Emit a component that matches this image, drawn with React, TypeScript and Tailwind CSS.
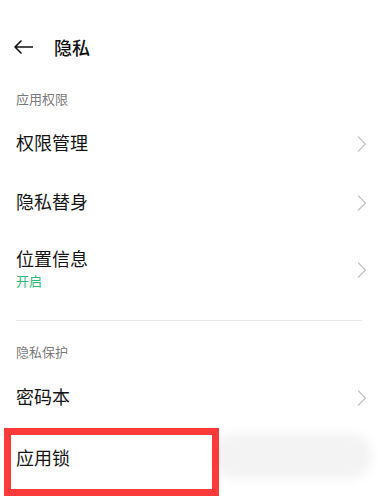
import { ReactNode } from "react";

const font = { fontFamily: '"Noto Sans CJK SC", "Noto Sans", sans-serif' };

function Chevron() {
  return (
    <svg width="10" height="16" viewBox="0 0 10 16" fill="none" className="shrink-0">
      <path d="M1.5 1 L8.5 8 L1.5 15" stroke="#c6c6c6" strokeWidth="1.4" strokeLinecap="round" strokeLinejoin="round" />
    </svg>
  );
}

function SectionLabel({ children }: { children: ReactNode }) {
  return (
    <div className="h-[22px] px-4 text-[13px] leading-[22px] text-[#7a7a7a]">{children}</div>
  );
}

function Row({
  title,
  sub,
  chevron = true,
  className = "h-[59px]",
}: {
  title: string;
  sub?: string;
  chevron?: boolean;
  className?: string;
}) {
  return (
    <div className={`flex items-center justify-between pl-4 pr-[11px] ${className}`}>
      <div className="flex flex-col -mt-[3px]">
        <div className="text-[18px] leading-[24px] text-[#141414]">{title}</div>
        {sub && <div className="mt-[1px] text-[13px] leading-[20px] text-[#2fb878]">{sub}</div>}
      </div>
      {chevron && <Chevron />}
    </div>
  );
}

export default function App() {
  return (
    <div className="w-[378px] h-[500px] overflow-hidden bg-white" style={font}>
      <div className="h-[88px] pt-[6px] flex items-center">
        <div className="flex items-center pl-[14px]">
          <svg width="19" height="14" viewBox="0 0 19 14" fill="none">
            <path d="M1 7 H18.5 M7 1 L1 7 L7 13" stroke="#111" strokeWidth="1.6" strokeLinecap="round" strokeLinejoin="round" />
          </svg>
          <span className="ml-[21px] text-[18px] font-medium leading-[24px] text-[#111]">隐私</span>
        </div>
      </div>

      <div className="pb-1">
        <SectionLabel>应用权限</SectionLabel>
      </div>
      <Row title="权限管理" />
      <Row title="隐私替身" />
      <Row title="位置信息" sub="开启" className="h-[75px]" />

      <div className="mt-[13px] mx-4 h-px bg-[#e6e6e6]" />

      <div className="mt-[20px]">
        <SectionLabel>隐私保护</SectionLabel>
      </div>
      <div className="mt-[5px]">
        <Row title="密码本" />
      </div>
      <div className="relative">
        <Row title="应用锁" chevron={false} className="h-[62px]" />
        <div className="absolute left-[212px] top-[6px] w-[160px] h-[46px] rounded-[22px] bg-[#f3f3f3] blur-[5px]" />
        <div className="absolute left-[4px] top-[1px] w-[215px] h-[68px] border-[7px] border-[#fc3a3a]" />
      </div>
    </div>
  );
}
